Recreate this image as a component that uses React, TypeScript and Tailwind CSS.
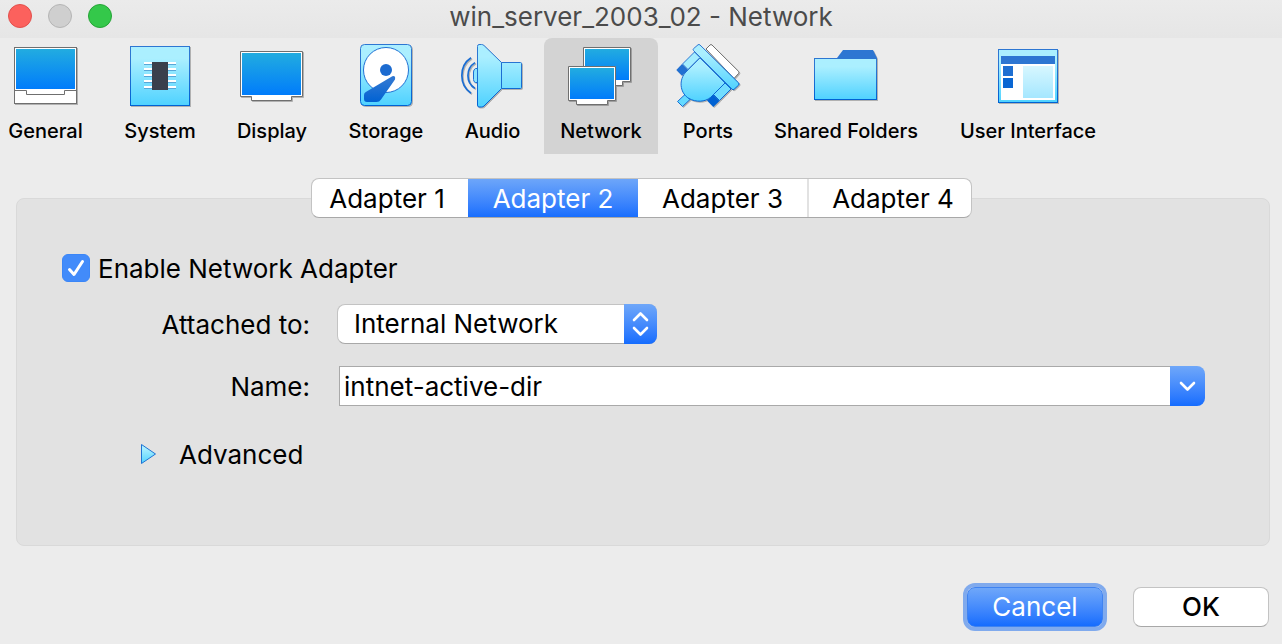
import { useState, type ReactNode } from "react";

function Gradients() {
  return (
    <svg className="absolute size-0" aria-hidden="true">
      <defs>
        <linearGradient id="screen" x1="0" y1="0" x2="0" y2="1">
          <stop offset="0" stopColor="#22ace0" />
          <stop offset="1" stopColor="#007cfb" />
        </linearGradient>
        <linearGradient id="sky" x1="0" y1="0" x2="0" y2="1">
          <stop offset="0.2" stopColor="#abefff" />
          <stop offset="1" stopColor="#4fd2ff" />
        </linearGradient>
        <linearGradient id="edge" x1="0" y1="0" x2="0" y2="1">
          <stop offset="0.2" stopColor="#2d76d2" />
          <stop offset="1" stopColor="#0062d3" />
        </linearGradient>
        <linearGradient id="pale" x1="0" y1="0" x2="0" y2="1">
          <stop offset="0" stopColor="#d7f7ff" />
          <stop offset="1" stopColor="#a5e7ff" />
        </linearGradient>
      </defs>
    </svg>
  );
}

function Icon({ children }: { children: ReactNode }) {
  return (
    <svg
      viewBox="0 0 64 64"
      aria-hidden="true"
      className="size-16 overflow-visible drop-shadow-[1px_1px_0_rgba(0,0,0,0.25)]"
    >
      {children}
    </svg>
  );
}

const GeneralIcon = (
  <Icon>
    <rect x="0.5" y="3.5" width="62" height="56" fill="#fff" stroke="#6f6f6f" />
    <rect x="2" y="5" width="59" height="40" fill="url(#screen)" />
    <path d="M1 46.5H12.5V50.5H50.5V46.5H62" fill="none" stroke="#6f6f6f" />
  </Icon>
);

const SystemIcon = (
  <Icon>
    <rect x="2.5" y="2.5" width="59" height="59" fill="url(#sky)" stroke="url(#edge)" />
    {[18, 24, 30, 36, 42].map((y) => (
      <g key={y}>
        <rect x="16" y={y} width="32" height="2" fill="#fff" />
        <rect x="16" y={y + 2} width="32" height="1" fill="#58a7d8" />
      </g>
    ))}
    <rect x="24" y="18" width="16" height="28" fill="#3a404b" />
  </Icon>
);

const DisplayIcon = (
  <Icon>
    <path d="M0.5 7.5H62.5V52.5H51.5V56.5H11.5V52.5H0.5Z" fill="#fff" stroke="#6f6f6f" />
    <rect x="2" y="9" width="59" height="42" fill="url(#screen)" />
  </Icon>
);

const StorageIcon = (
  <Icon>
    <rect x="6.5" y="0.5" width="51" height="61" rx="4" fill="url(#sky)" stroke="url(#edge)" />
    <circle cx="32" cy="26" r="22.5" fill="#fff" stroke="#2272d4" />
    <circle cx="32" cy="26" r="6" fill="#1c6bd0" />
    <path
      d="M38.3 32.2Q41.8 31.4 41 35.4L27 55.5Q25.5 58 22.5 58H13Q10 58 10 55V51Q10 49 11.8 47.9Z"
      fill="url(#edge)"
    />
  </Icon>
);

const AudioIcon = (
  <Icon>
    <path d="M16 24.5H14.5Q12.5 25.5 12.5 28V35.5Q12.5 38 14.5 38.5H16" fill="#8be4ff" stroke="#1a6dd3" />
    <path
      d="M18 0.5H20.5Q22 0.5 23 1.5L40.5 18.5H59.5Q60.5 18.5 60.5 19.5V43.5Q60.5 44.5 59.5 44.5H40.5L23 62Q22 63 20.5 63H18Q16.5 63 16.5 61V2.5Q16.5 0.5 18 0.5Z"
      fill="url(#sky)"
      stroke="url(#edge)"
    />
    <path d="M40.5 18.5V44.5" stroke="#1a6dd3" />
    <path d="M14 18.6C4.6 24.5 4.6 38.5 14 44.4M10 13.8C-2.2 22 -2.2 41 10 49.2" fill="none" stroke="#1a6dd3" strokeWidth="1.7" />
  </Icon>
);

const NetworkIcon = (
  <Icon>
    <path d="M14.5 3.5H61.5V37.5H53.5V41.5H22.5V37.5H14.5Z" fill="#fff" stroke="#6f6f6f" />
    <rect x="16" y="5" width="44" height="31" fill="url(#screen)" />
    <path d="M-0.5 22.5H46.5V56.5H38.5V60.5H7.5V56.5H-0.5Z" fill="#fff" stroke="#6f6f6f" />
    <rect x="1" y="24" width="44" height="31" fill="url(#screen)" />
  </Icon>
);

const PortsIcon = (
  <Icon>
    <path d="M30 5L34 1Q35 0 36 1L62.5 27.3Q63.3 28.5 62.5 29.5L58 34.5Z" fill="#fff" stroke="#6f6f6f" />
    <path d="M9 50.5L14 55.5L6.5 62.5L1.5 57.5Z" fill="#65daff" stroke="#1a6dd3" />
    <path d="M24 14L9 29C2 38 5 50 13 54.5C20 58.5 29 58 34.5 53.5L49 39Z" fill="url(#sky)" stroke="url(#edge)" />
    <path d="M6.5 20L18.5 8L24 13.5L12 25.5Z" fill="#a4edff" stroke="#2d76d2" />
    <path d="M49 39L55 45L43.5 56.5L37.5 50.5Z" fill="#71ddff" stroke="#0c68d3" />
    <path d="M6 20L12 26L6 31.7L0.3 26Z" fill="#2170d2" />
    <path d="M37.3 50.7L43.5 57L37.3 63L31 56.5Z" fill="#0062d3" />
    <path d="M17.5 6.5Q16.7 5.5 17.5 4.7L22 0.8Q23 0 24 1L62.7 39Q63.4 40 62.7 41L58 45.4Q57 46.2 56 45.2Z" fill="url(#sky)" stroke="url(#edge)" />
  </Icon>
);

const FolderIcon = (
  <Icon>
    <path d="M23 14L29 6H59L63 14Z" fill="#2d76d2" />
    <rect x="0.5" y="14.5" width="62" height="41" fill="url(#sky)" stroke="url(#edge)" />
  </Icon>
);

const InterfaceIcon = (
  <Icon>
    <rect x="2.5" y="5.5" width="59" height="53" fill="url(#sky)" stroke="url(#edge)" />
    <rect x="5" y="20" width="54" height="36" fill="#fff" />
    <rect x="5" y="12" width="54" height="8" fill="#2d76d2" />
    <rect x="7" y="22" width="10" height="10" fill="#1e6fd2" />
    <rect x="7" y="34" width="10" height="10" fill="#0966d3" />
    <rect x="27" y="22" width="30" height="32" fill="url(#pale)" />
  </Icon>
);

const sections = [
  { name: "General", width: "w-[107px]", icon: GeneralIcon },
  { name: "System", width: "w-[106px]", icon: SystemIcon },
  { name: "Display", width: "w-[102px]", icon: DisplayIcon },
  { name: "Storage", width: "w-[110px]", icon: StorageIcon },
  { name: "Audio", width: "w-[87px]", icon: AudioIcon },
  { name: "Network", width: "w-[114px]", icon: NetworkIcon },
  { name: "Ports", width: "w-[84px]", icon: PortsIcon },
  { name: "Shared Folders", width: "w-[176px]", icon: FolderIcon },
  { name: "User Interface", width: "w-[172px]", icon: InterfaceIcon },
];

const tabs = [
  { name: "Adapter 1", size: "w-[156px] pr-1.5" },
  { name: "Adapter 2", size: "w-[170px]" },
  { name: "Adapter 3", size: "w-[169px]" },
  { name: "Adapter 4", size: "w-[164px] pl-1.5 border-l-2 border-[#e2e2e2]" },
];

export default function App() {
  const [section, setSection] = useState("Network");
  const [tab, setTab] = useState("Adapter 2");
  const [enabled, setEnabled] = useState(true);
  const [name, setName] = useState("intnet-active-dir");

  return (
    <div className="flex min-h-screen flex-col overflow-hidden bg-[#ececec] font-['Inter','Liberation_Sans',sans-serif] text-[26px] leading-8 text-black">
      <Gradients />
      <header className="grid h-[38px] grid-cols-[1fr_auto_1fr] bg-linear-to-b from-[#ebebeb] to-[#e6e6e6]">
        <div className="flex gap-4 pt-1 pl-2">
          <button aria-label="Close" className="size-6 rounded-full border border-[#e2504c] bg-[#fc615d]" />
          <button aria-label="Minimize" className="size-6 rounded-full border border-[#b5b5b5] bg-[#cfcfcf]" />
          <button aria-label="Zoom" className="size-6 rounded-full border border-[#25a436] bg-[#34c84a]" />
        </div>
        <h1 className="pt-px text-[#4b4b4b]">win_server_2003_02 - Network</h1>
      </header>

      <nav className="-ml-2 flex gap-2">
        {sections.map((s) => (
          <button
            key={s.name}
            onClick={() => setSection(s.name)}
            className={`flex h-[116px] shrink-0 flex-col items-center rounded-t-lg pt-1.5 ${s.width} ${
              section === s.name ? "bg-[#d3d3d3]" : ""
            }`}
          >
            {s.icon}
            <span className="mt-[11px] text-[20px] leading-6 font-medium whitespace-nowrap">{s.name}</span>
          </button>
        ))}
      </nav>

      <main className="mt-6 flex flex-1 flex-col pr-3 pl-4">
        <div
          role="tablist"
          className="z-10 mr-[3px] -mb-5 flex h-10 self-center overflow-hidden rounded-lg border border-[#c3c3c3] border-b-[#a8a8a8] bg-white"
        >
          {tabs.map((t) => (
            <button
              key={t.name}
              role="tab"
              aria-selected={tab === t.name}
              onClick={() => setTab(t.name)}
              className={`-my-px h-10 pt-0.5 ${t.size} ${
                tab === t.name ? "bg-linear-to-b from-[#6fa7f9] to-[#146cfe] text-white" : ""
              }`}
            >
              {t.name}
            </button>
          ))}
        </div>

        <section className="flex-1 rounded-lg border border-[#d9d9d9] bg-[#e2e2e2] pt-[49px] pr-16 pl-[45px]">
          <label className="flex h-10 w-fit items-center gap-2">
            <span className="relative size-7">
              <input
                type="checkbox"
                checked={enabled}
                onChange={(e) => setEnabled(e.target.checked)}
                className="block size-7 appearance-none rounded-md border border-[#b5b5b5] bg-white checked:border-[#3b86f7] checked:bg-[#428bfa]"
              />
              {enabled && (
                <svg viewBox="0 0 28 28" className="pointer-events-none absolute inset-0" aria-hidden="true">
                  <path d="M7.5 15.5L12 20.5L20.5 7.5" fill="none" stroke="#fff" strokeWidth="3" strokeLinecap="round" strokeLinejoin="round" />
                </svg>
              )}
            </span>
            <span className="pt-0.5">Enable Network Adapter</span>
          </label>

          <div className="mt-4 grid grid-cols-[248px_1fr] items-center gap-x-[27px] gap-y-[22px]">
            <label htmlFor="attached" className="pt-0.5 text-right">
              Attached to:
            </label>
            <div className="relative h-10 w-80">
              <select
                id="attached"
                className="h-10 w-full appearance-none rounded-lg border border-[#c3c3c3] border-b-[#a8a8a8] bg-white pr-9 pl-4"
              >
                <option>Internal Network</option>
                <option>NAT</option>
                <option>Bridged Adapter</option>
                <option>Host-only Adapter</option>
              </select>
              <svg
                viewBox="0 0 33 40"
                aria-hidden="true"
                className="pointer-events-none absolute top-0 right-0 h-10 w-[33px] rounded-r-lg bg-linear-to-b from-[#6fa7f9] to-[#146cfe]"
              >
                <path d="M10 16L16.5 9.5L23 16M10 24L16.5 30.5L23 24" fill="none" stroke="#fff" strokeWidth="2.6" strokeLinecap="round" strokeLinejoin="round" />
              </svg>
            </div>

            <label htmlFor="name" className="pt-0.5 text-right">
              Name:
            </label>
            <div className="flex pl-0.5">
              <input
                id="name"
                value={name}
                onChange={(e) => setName(e.target.value)}
                className="h-10 min-w-0 flex-1 border border-r-0 border-[#a9a9a9] bg-white pl-1 outline-none"
              />
              <button
                aria-label="Show network names"
                className="h-10 w-[35px] rounded-r-lg bg-linear-to-b from-[#6fa7f9] to-[#146cfe]"
              >
                <svg viewBox="0 0 35 40" className="h-10 w-[35px]" aria-hidden="true">
                  <path d="M11 17L17.5 23.5L24 17" fill="none" stroke="#fff" strokeWidth="2.6" strokeLinecap="round" strokeLinejoin="round" />
                </svg>
              </button>
            </div>
          </div>

          <button className="mt-7 ml-[78px] flex h-10 items-center gap-[22px]">
            <svg viewBox="0 0 17 22" className="h-[22px] w-[17px]" aria-hidden="true">
              <path d="M1.5 1.5V20.5L15.5 11Z" fill="url(#sky)" stroke="#1e73d4" strokeLinejoin="round" />
            </svg>
            <span className="pt-0.5">Advanced</span>
          </button>
        </section>
      </main>

      <footer className="flex justify-end gap-[30px] pt-[41px] pr-[13px] pb-[17px]">
        <button className="h-10 w-[136px] rounded-lg border border-[#3f83f1] bg-linear-to-b from-[#6fa7f9] to-[#146cfe] text-white ring-4 ring-[#80aaed]">
          Cancel
        </button>
        <button className="h-10 w-[136px] rounded-lg border border-[#c3c3c3] border-b-[#a8a8a8] bg-white font-medium">
          OK
        </button>
      </footer>
    </div>
  );
}
